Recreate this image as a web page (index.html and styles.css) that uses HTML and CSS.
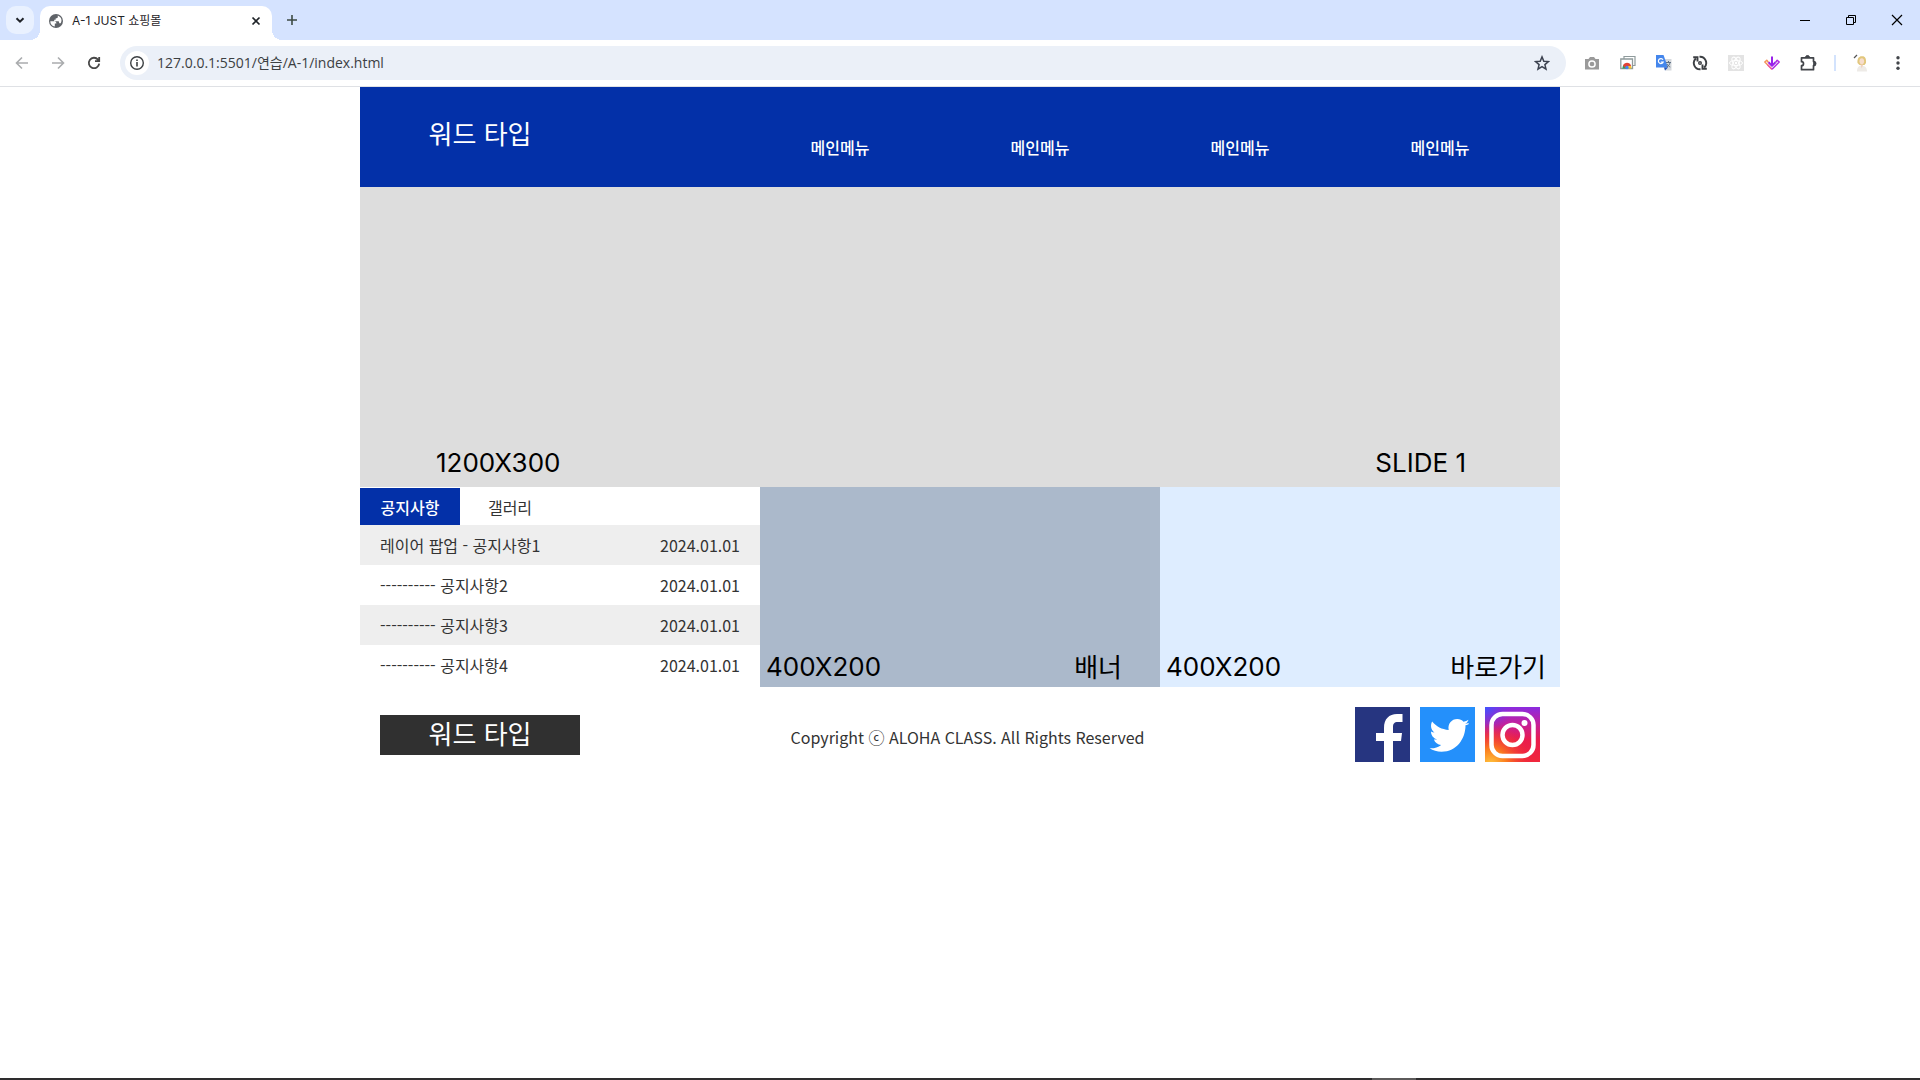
FILE: index.html
```html
<!DOCTYPE html>
<html lang="ko">
<head>
<meta charset="utf-8">
<title>A-1 JUST 쇼핑몰</title>
<link rel="stylesheet" href="styles.css">
</head>
<body>
<div class="browser">
  <div class="tabstrip">
    <button class="tab-search" aria-label="탭 검색"><svg width="16" height="16" viewBox="0 0 16 16"><path d="M4.500 6.200 8 9.700l3.500-3.500" fill="none" stroke="#1f2328" stroke-width="2"/></svg></button>
    <div class="tab">
      <svg width="16" height="16" viewBox="0 0 16 16"><circle cx="8" cy="8" r="7" fill="#5f6368"/><path d="M2.300 8.200h3.900c1.700.1 2.300 1 2.200 2.400H6.800v2.900C4 13 2.200 11 2.300 8.200zM9.800 2.600v1.500c-.1 1-.8 1.300-2.200 1.300v1.400H6.200v1.400h4.200c.8.300.8 1.500.8 2.100h1.500c1.800-2.900.7-6.200-2.900-7.700z" fill="#fff"/></svg>
      <span class="tab-title">A-1 JUST 쇼핑몰</span>
      <button class="tab-close" aria-label="탭 닫기"><svg width="16" height="16" viewBox="0 0 16 16"><path d="m4.500 4.500 7 7m0-7-7 7" stroke="#1f2328" stroke-width="1.700"/></svg></button>
    </div>
    <button class="new-tab" aria-label="새 탭"><svg width="16" height="16" viewBox="0 0 16 16"><path d="M8 3v10M3 8h10" stroke="#3c4a44" stroke-width="1.600"/></svg></button>
    <div class="window-controls">
      <button aria-label="최소화"><svg width="12" height="12" viewBox="0 0 12 12"><path d="M1 6.500h10" stroke="#000"/></svg></button>
      <button aria-label="이전 크기로"><svg width="12" height="12" viewBox="0 0 12 12" fill="none" stroke="#000"><path d="M1.500 3.500h7v7h-7zM3.500 3.500v-2h7v7h-2"/></svg></button>
      <button aria-label="닫기"><svg width="12" height="12" viewBox="0 0 12 12"><path d="m1 1 10 10M11 1 1 11" stroke="#000" stroke-width="1.200"/></svg></button>
    </div>
  </div>
  <div class="toolbar">
    <div class="nav-buttons">
      <button aria-label="뒤로"><svg width="16" height="16" viewBox="0 0 16 16" fill="none" stroke="#aaacae" stroke-width="1.600"><path d="M14 8H3M8 2.500 2.500 8 8 13.500"/></svg></button>
      <button aria-label="앞으로"><svg width="16" height="16" viewBox="0 0 16 16" fill="none" stroke="#aaacae" stroke-width="1.600"><path d="M2 8h11M8 2.500 13.500 8 8 13.500"/></svg></button>
      <button aria-label="새로고침"><svg width="16" height="16" viewBox="0 0 16 16" fill="none" stroke="#474747" stroke-width="1.800"><path d="M13.200 8.600A5.200 5.200 0 1 1 12 4.600l1 1.200M13.200 2v4.200H9"/></svg></button>
    </div>
    <div class="address">
      <button class="site-info" aria-label="사이트 정보"><svg width="16" height="16" viewBox="0 0 16 16" fill="none" stroke="#3c4043" stroke-width="1.400"><circle cx="8" cy="8" r="6.300"/><path d="M8 7v4.400M8 4.400v1.500" stroke-width="1.600"/></svg></button>
      <input class="url" type="text" aria-label="주소" value="127.0.0.1:5501/연습/A-1/index.html">
      <button class="star" aria-label="북마크"><svg width="16" height="16" viewBox="0 0 16 16" fill="none" stroke="#3c4250" stroke-width="1.500"><path d="m8 1.900 1.800 4.300 4.600.4-3.500 3 1.100 4.600L8 11.700l-4 2.500 1.100-4.600-3.500-3 4.600-.4z"/></svg></button>
    </div>
    <div class="extensions">
      <button aria-label="캡처"><svg width="16" height="16" viewBox="0 0 16 16"><path d="M1 4h3.500L6 2h4l1.500 2H15v10.500H1z" fill="#9a9a9a"/><circle cx="8" cy="9" r="3.100" fill="none" stroke="#fff" stroke-width="1.500"/></svg></button>
      <button aria-label="웹 스토어"><svg width="16" height="16" viewBox="0 0 16 16"><path d="M4 4V1.500h11v9h-3" fill="none" stroke="#8f9b9c" stroke-width="1.200"/><path d="M.8 4h11.700v9.500H.8z" fill="#fff" stroke="#8f9b9c" stroke-width="1.300"/><path d="M2.500 13.500a4.800 4.800 0 0 1 2-4.500L7 13.500z" fill="#27a257"/><path d="M3 10.500C4.500 6.700 10 6.700 11.200 11L7 11.200 5 13z" fill="#e14336"/><path d="M7 11h4.200l.3 2.500H7z" fill="#f7c52d"/><circle cx="7" cy="12.500" r="1.700" fill="#4285f4"/></svg></button>
      <button aria-label="번역"><svg width="16" height="16" viewBox="0 0 16 16"><path d="M6 4h9.500v11.500H9z" fill="#d6d9dd"/><path d="M0 0h7.500L12 12.500H0z" fill="#4486ec"/><path d="m8 12.500 4 0-3 3z" fill="#2253ba"/><path d="M7 4.700A2.500 2.500 0 1 0 7.200 7H4.800" fill="none" stroke="#fff" stroke-width="1.200"/><path d="M10 7.500h5M12.500 6v1.500m1.500 0c-.3 2-1.600 3.500-3 4.500m0-3c.7 1.500 2 2.500 3.300 3" fill="none" stroke="#5e7185"/></svg></button>
      <button aria-label="동기화"><svg width="16" height="16" viewBox="0 0 16 16" fill="none" stroke="#3c3f43" stroke-width="1.900"><path d="M8.500 14.200A6.200 6.200 0 0 1 3.800 3.500M1.200 2.200h4.300v4.300M7.500 1.800a6.200 6.200 0 0 1 4.700 10.700M14.800 13.800h-4.300V9.500"/><circle cx="8" cy="8" r="1.300" stroke-width="1.400"/></svg></button>
      <button aria-label="React 도구"><svg width="16" height="16" viewBox="0 0 16 16"><path d="M0 0h16v16H0z" fill="#e3e3e3"/><g fill="none" stroke="#fff"><ellipse cx="8" cy="8" rx="6.500" ry="2.600"/><ellipse cx="8" cy="8" rx="6.500" ry="2.600" transform="rotate(60 8 8)"/><ellipse cx="8" cy="8" rx="6.500" ry="2.600" transform="rotate(120 8 8)"/></g><circle cx="8" cy="8" r="1.200" fill="#fff"/></svg></button>
      <button aria-label="다운로더"><svg width="16" height="16" viewBox="0 0 16 16" fill="none" stroke-width="1.500" stroke-linejoin="round"><path d="M4.500 7.500 2.800 5.200.8 7 8 14.200" stroke="#f5945a"/><path d="M3.500 9.700 8 14.200" stroke="#ee5aa8"/><path d="m8 14.200 7.200-7.200-2-1.800-1.700 2.300" stroke="#b02be0"/><path d="M8 1.500v9.300M4.500 7.300 8 10.800l3.500-3.500" stroke="#9a22ea" stroke-width="2"/></svg></button>
      <button aria-label="확장 프로그램"><svg width="18" height="18" viewBox="0 0 18 18"><path d="M2.500 3.800h12v3.700a2 2 0 0 1 0 4v4.200h-12v-4a2 2 0 0 0 0-4z" fill="none" stroke="#42454a" stroke-width="1.700" stroke-linejoin="round"/><path d="M6.500 3.500a2 2 0 0 1 4 0zM14.700 7.500a2 2 0 0 1 0 4z" fill="#42454a" stroke="#42454a"/></svg></button>
      <span class="divider"></span>
      <button class="profile" aria-label="프로필"><svg width="18" height="18" viewBox="0 0 18 18"><path d="m1 4 3-3" stroke="#555" stroke-width="1.200"/><path d="M4.500 9C4 4 6.500 2 9 2.300c3-.3 4.500 2.200 4 6.700l-1.500 2h-5z" fill="#e2c77d"/><ellipse cx="8.800" cy="7.300" rx="2.300" ry="3" fill="#f7ddcc"/><path d="M4 17.500c0-4 1.500-5.500 4.500-6 3.500.3 5.500 2 5.500 6z" fill="#eeebe7"/><path d="m7.500 10.500 1.200 4 1.500-4z" fill="#efd0bd"/></svg></button>
      <button class="more" aria-label="메뉴"><svg width="16" height="16" viewBox="0 0 16 16" fill="#42454a"><circle cx="8" cy="2.700" r="1.700"/><circle cx="8" cy="8" r="1.700"/><circle cx="8" cy="13.300" r="1.700"/></svg></button>
    </div>
  </div>
</div>

<div class="page">
  <header class="header">
    <a class="logo" href="#">워드 타입</a>
    <nav class="menu">
      <a href="#">메인메뉴</a>
      <a href="#">메인메뉴</a>
      <a href="#">메인메뉴</a>
      <a href="#">메인메뉴</a>
    </nav>
  </header>

  <section class="slide">
    <span>1200X300</span>
    <span>SLIDE 1</span>
  </section>

  <main class="contents">
    <section class="board">
      <div class="board-tabs">
        <button class="active">공지사항</button>
        <button>갤러리</button>
      </div>
      <ul class="notices">
        <li><a href="#">레이어 팝업 - 공지사항1</a><time>2024.01.01</time></li>
        <li><a href="#">---------- 공지사항2</a><time>2024.01.01</time></li>
        <li><a href="#">---------- 공지사항3</a><time>2024.01.01</time></li>
        <li><a href="#">---------- 공지사항4</a><time>2024.01.01</time></li>
      </ul>
    </section>
    <a class="card banner" href="#"><span class="size">400X200</span><span>배너</span></a>
    <a class="card shortcut" href="#"><span class="size">400X200</span><span>바로가기</span></a>
  </main>

  <footer class="footer">
    <a class="logo logo-dark" href="#">워드 타입</a>
    <p class="copyright">Copyright ⓒ ALOHA CLASS. All Rights Reserved</p>
    <div class="sns">
      <a href="#" aria-label="Facebook"><svg viewBox="0 0 55 55"><path d="M0 0h55v55H0z" fill="#263580"/><path d="M29 55V34h-8v-8h8v-5c0-9 5-14 13-14h5.500v8H43c-4 0-5 2-5 5v6h9l-1 8h-8v21z" fill="#fff"/></svg></a>
      <a href="#" aria-label="Twitter"><svg viewBox="0 0 55 55"><path d="M0 0h55v55H0z" fill="#2490fb"/><path d="M48.500 17.200c-1.200.6-2.300 1-3 1.100.1 13-8.500 26.500-24 26.500-4.500 0-8.500-1.300-11.900-3.500 4.400.3 8.300-.8 11.600-3.300-3.400-.2-6.200-2.300-7.300-5.500h3.400c-3.600-1-6.300-4-6.300-8 1.100.6 2.200.9 3.500 1-3.500-2.500-4.400-7-2.400-11 4.100 5 9.800 8 16.600 8.400C27.500 17 31.500 12 37.300 12c2.500 0 4.700 1 6.200 2.700 1.800-.4 3.500-1 5-2-.6 2-1.800 3.200-3.400 4.200 1.200-.1 2.400-.4 3.600-.9z" fill="#fff"/></svg></a>
      <a href="#" aria-label="Instagram"><svg viewBox="0 0 55 55"><defs><linearGradient id="ig-base" x1="0" y1="0" x2="0" y2="1"><stop offset="0" stop-color="#8a2be0"/><stop offset=".3" stop-color="#c4209c"/><stop offset=".6" stop-color="#ea1c4c"/><stop offset="1" stop-color="#f0283c"/></linearGradient><radialGradient id="ig-cool" cx="0" cy="0" r=".5"><stop offset="0" stop-color="#3f55ff"/><stop offset="1" stop-color="#7a30e0" stop-opacity="0"/></radialGradient><radialGradient id="ig-warm" cx=".1" cy="1.050" r=".75"><stop offset="0" stop-color="#ffc83e"/><stop offset=".4" stop-color="#fb7a1e"/><stop offset="1" stop-color="#f02838" stop-opacity="0"/></radialGradient></defs><path d="M0 0h55v55H0z" fill="url(#ig-base)"/><path d="M0 0h55v55H0z" fill="url(#ig-cool)"/><path d="M0 0h55v55H0z" fill="url(#ig-warm)"/><g fill="none" stroke="#fff" stroke-width="4.500"><rect x="6.500" y="7" width="42" height="42" rx="11"/><circle cx="27.500" cy="28" r="10"/></g><circle cx="39.500" cy="16" r="3" fill="#fff"/></svg></a>
    </div>
  </footer>
</div>
<div class="taskbar"></div>
</body>
</html>
```
FILE: styles.css
```css
* { box-sizing: border-box; }

body {
  display: flex;
  flex-direction: column;
  min-height: 100vh;
  margin: 0;
  background: #fff;
  color: #333;
  font: 16px/24px "Noto Sans CJK KR", sans-serif;
}

a { color: inherit; text-decoration: none; }
button { padding: 0; border: 0; background: none; color: inherit; font: inherit; }
svg { display: block; }

/* Browser window */
.browser { border-bottom: 1px solid #dfe1e5; font-family: "Open Sans", "Noto Sans CJK KR", sans-serif; }
.browser button { display: flex; align-items: center; justify-content: center; }

.tabstrip { display: flex; align-items: center; height: 40px; padding-left: 6px; background: #d5e3ff; }
.tab-search { width: 28px; height: 28px; border-radius: 10px; background: #e9f1ff; }
.tab {
  position: relative;
  display: flex;
  align-items: center;
  align-self: flex-end;
  gap: 8px;
  width: 232px;
  height: 34px;
  margin-left: 6px;
  padding: 0 8px 4px;
  border-radius: 10px 10px 0 0;
  background: #fff;
}
.tab::before, .tab::after {
  content: "";
  position: absolute;
  bottom: 0;
  width: 10px;
  height: 10px;
}
.tab::before { right: 100%; background: radial-gradient(circle at 0 0, transparent 10px, #fff 10px); }
.tab::after { left: 100%; background: radial-gradient(circle at 100% 0, transparent 10px, #fff 10px); }
.tab-title { flex: 1; color: #1f2328; font-family: Inter, "Noto Sans CJK KR", sans-serif; font-size: 12px; line-height: 16px; }
.new-tab { width: 28px; height: 28px; margin-left: 6px; }
.window-controls { display: flex; margin-left: auto; }
.window-controls button { width: 46px; height: 40px; }

.toolbar { display: flex; align-items: center; height: 46px; background: #fff; }
.nav-buttons { display: flex; padding: 0 8px 0 4px; }
.nav-buttons button { width: 36px; height: 34px; }
.address { display: flex; flex: 1; align-items: center; height: 34px; padding: 0 10px 0 5px; border-radius: 17px; background: #ebf0f8; }
.site-info { width: 24px; height: 24px; border-radius: 50%; background: #fff; }
.url { flex: 1; padding: 0 8px; border: 0; background: none; color: #3c4043; font: inherit; font-size: 14px; line-height: 20px; }
.star { width: 28px; height: 28px; }
.extensions { display: flex; align-items: center; padding: 0 4px 0 8px; }
.extensions button { width: 36px; height: 34px; }
.divider { width: 2px; height: 16px; margin: 0 8px; background: #d3e3fd; }

/* Shop page */
.page { flex: 1; width: 100%; max-width: 1200px; margin: 0 auto; }

.header { display: flex; align-items: center; justify-content: space-between; height: 100px; padding: 0 20px 4px; background: #0330a8; }
.logo { width: 200px; height: 40px; color: #fff; font-size: 26px; line-height: 36px; text-align: center; }
.logo-dark { background: #303030; }
.menu { display: grid; flex: 1; grid-template-columns: repeat(4, 1fr); max-width: 800px; padding-top: 24px; color: #fff; font-weight: 500; text-align: center; }

.slide {
  display: flex;
  align-items: flex-end;
  justify-content: space-between;
  height: 300px;
  padding: 0 94px 8px 76px;
  background: #ddd;
  color: #000;
  font: 26px/32px Inter, sans-serif;
}

.contents { display: grid; grid-template-columns: repeat(3, 1fr); height: 200px; }
.board-tabs { display: flex; padding-top: 1px; }
.board-tabs button { width: 100px; height: 37px; }
.board-tabs .active { background: #0330a8; color: #fff; font-weight: 500; }
.notices { margin: 0; padding: 0; list-style: none; }
.notices li { display: flex; justify-content: space-between; height: 40px; padding: 0 20px; line-height: 40px; }
.notices li:nth-child(odd) { background: #eee; }

.card { display: flex; align-items: flex-end; justify-content: space-between; color: #000; font-size: 26px; line-height: 42px; }
.size { font-family: Inter, sans-serif; line-height: 40px; }
.banner { padding: 0 38px 0 6px; background: #abb9cb; }
.shortcut { padding: 0 14px 0 6px; background: #deedff; }

.footer { display: flex; align-items: center; justify-content: space-between; padding: 20px; }
.copyright { margin: 4px 0 0; }
.sns { display: flex; gap: 10px; }
.sns a { width: 55px; }

.taskbar { height: 2px; background: linear-gradient(90deg, #2e2d2e 1372px, #5c5a5a 1372px 1416px, #2e2d2e 1416px); }
```
